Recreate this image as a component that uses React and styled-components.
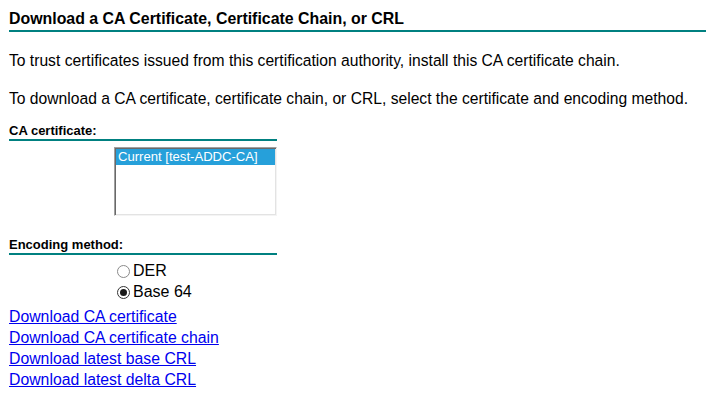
import React from "react";
import styled, { createGlobalStyle } from "styled-components";

const Global = createGlobalStyle`
  html, body { margin: 0; padding: 0; background: #fff; }
  body { font-family: Arial, "Liberation Sans", sans-serif; color: #000; }
`;

const Page = styled.div`
  padding: 10px 0 0 9px;
  width: 697px;
  font-family: Arial, "Liberation Sans", sans-serif;
`;

const Title = styled.div`
  font-size: 15.9px;
  font-weight: bold;
  line-height: 18px;
  padding-bottom: 2px;
  border-bottom: 2px solid #008080;
`;

const Para = styled.p`
  margin: ${(p) => p.$top}px 0 0 0;
  font-size: 15.65px;
  line-height: 18px;
`;

const Section = styled.div`
  width: 268px;
  margin-top: ${(p) => p.$top}px;
  font-size: 13px;
  font-weight: bold;
  line-height: 15px;
  padding-bottom: 1px;
  border-bottom: 2px solid #008080;
`;

const Indent = styled.div`
  padding-left: 105px;
`;

const ListBox = styled.div`
  box-sizing: border-box;
  margin-top: 6px;
  width: 163px;
  height: 69px;
  border-top: 1px solid #a0a0a0;
  border-left: 1px solid #a0a0a0;
  border-right: 1px solid #f4f4f4;
  border-bottom: 1px solid #f4f4f4;
  box-shadow: inset 1px 1px 0 #696969, inset -1px -1px 0 #e3e3e3;
  padding: 1px;
  background: #fff;
`;

const Option = styled.div`
  background: #26a0da;
  color: #fff;
  font-size: 13.1px;
  line-height: 16px;
  padding-left: 2px;
`;

const Radios = styled.div`
  margin-top: 6px;
  display: flex;
  flex-direction: column;
  gap: 1px;
`;

const RadioRow = styled.label`
  display: flex;
  align-items: center;
  font-size: 16px;
  line-height: 20px;
  height: 20px;
`;

const Circle = styled.span`
  box-sizing: border-box;
  width: 13px;
  height: 13px;
  border-radius: 50%;
  border: 1px solid ${(p) => (p.$checked ? "#333" : "#8a8a8a")};
  margin: 0 3px 0 3px;
  display: flex;
  align-items: center;
  justify-content: center;
  &::after {
    content: "";
    display: ${(p) => (p.$checked ? "block" : "none")};
    width: 7px;
    height: 7px;
    border-radius: 50%;
    background: #1a1a1a;
  }
`;

const Links = styled.div`
  margin-top: 4px;
  display: flex;
  flex-direction: column;
`;

const Link = styled.a`
  color: #0000ee;
  font-size: 15.8px;
  line-height: 21px;
  text-decoration: underline;
  align-self: flex-start;
`;

export default function App() {
  return (
    <>
      <Global />
      <Page>
        <Title>Download a CA Certificate, Certificate Chain, or CRL</Title>
        <Para $top={20}>
          To trust certificates issued from this certification authority, install this CA certificate chain.
        </Para>
        <Para $top={20}>
          To download a CA certificate, certificate chain, or CRL, select the certificate and encoding method.
        </Para>
        <Section $top={15}>CA certificate:</Section>
        <Indent>
          <ListBox>
            <Option>Current [test-ADDC-CA]</Option>
          </ListBox>
        </Indent>
        <Section $top={21}>Encoding method:</Section>
        <Indent>
          <Radios>
            <RadioRow>
              <Circle />
              DER
            </RadioRow>
            <RadioRow>
              <Circle $checked />
              Base 64
            </RadioRow>
          </Radios>
        </Indent>
        <Links>
          <Link href="#">Download CA certificate</Link>
          <Link href="#">Download CA certificate chain</Link>
          <Link href="#">Download latest base CRL</Link>
          <Link href="#">Download latest delta CRL</Link>
        </Links>
      </Page>
    </>
  );
}
